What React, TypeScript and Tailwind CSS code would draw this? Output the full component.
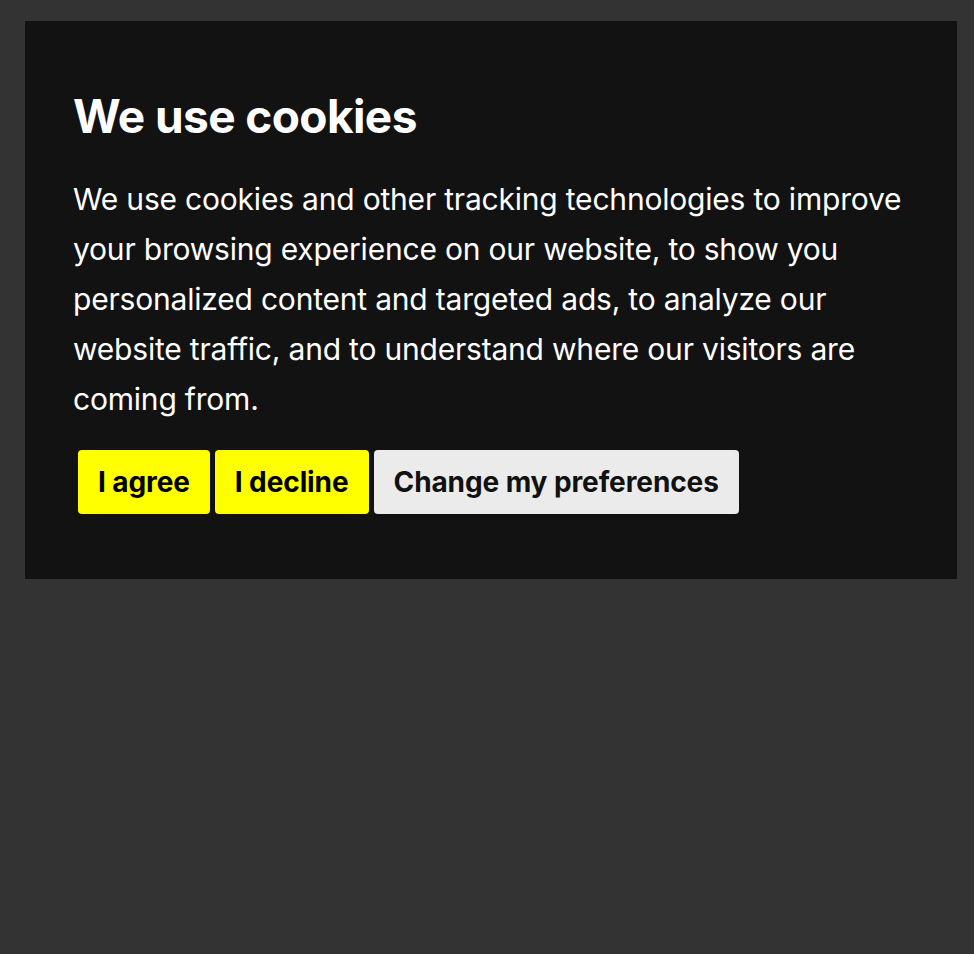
import React from "react";

export default function App() {
  return (
    <div className="min-h-[954px] w-full bg-[#333333] pt-[21px] pl-[25px] pr-[17px]" style={{ fontFamily: "Inter, 'Noto Sans', sans-serif" }}>
      <div className="w-[932px] h-[558px] bg-[#121212] px-[48px] pt-[81px] text-white">
        <h1 className="text-[46px] leading-[28px] font-bold tracking-[-0.6px]">We use cookies</h1>
        <p className="mt-[44px] text-[30px] leading-[50px] tracking-[-0.2px]">
          We use cookies and other tracking technologies to improve your browsing experience on our website, to show you personalized content and targeted ads, to analyze our website traffic, and to understand where our visitors are coming from.
        </p>
        <div className="mt-[26px] flex gap-[5px] pl-[5px]">
          <button className="h-[64px] px-[20px] rounded-[4px] bg-[#ffff00] text-black text-[28px] font-bold tracking-[-0.1px]">I agree</button>
          <button className="h-[64px] px-[20px] rounded-[4px] bg-[#ffff00] text-black text-[28px] font-bold tracking-[-0.1px]">I decline</button>
          <button className="h-[64px] px-[20px] rounded-[4px] bg-[#ebebeb] text-[#111] text-[28px] font-bold tracking-[-0.1px]">Change my preferences</button>
        </div>
      </div>
    </div>
  );
}
